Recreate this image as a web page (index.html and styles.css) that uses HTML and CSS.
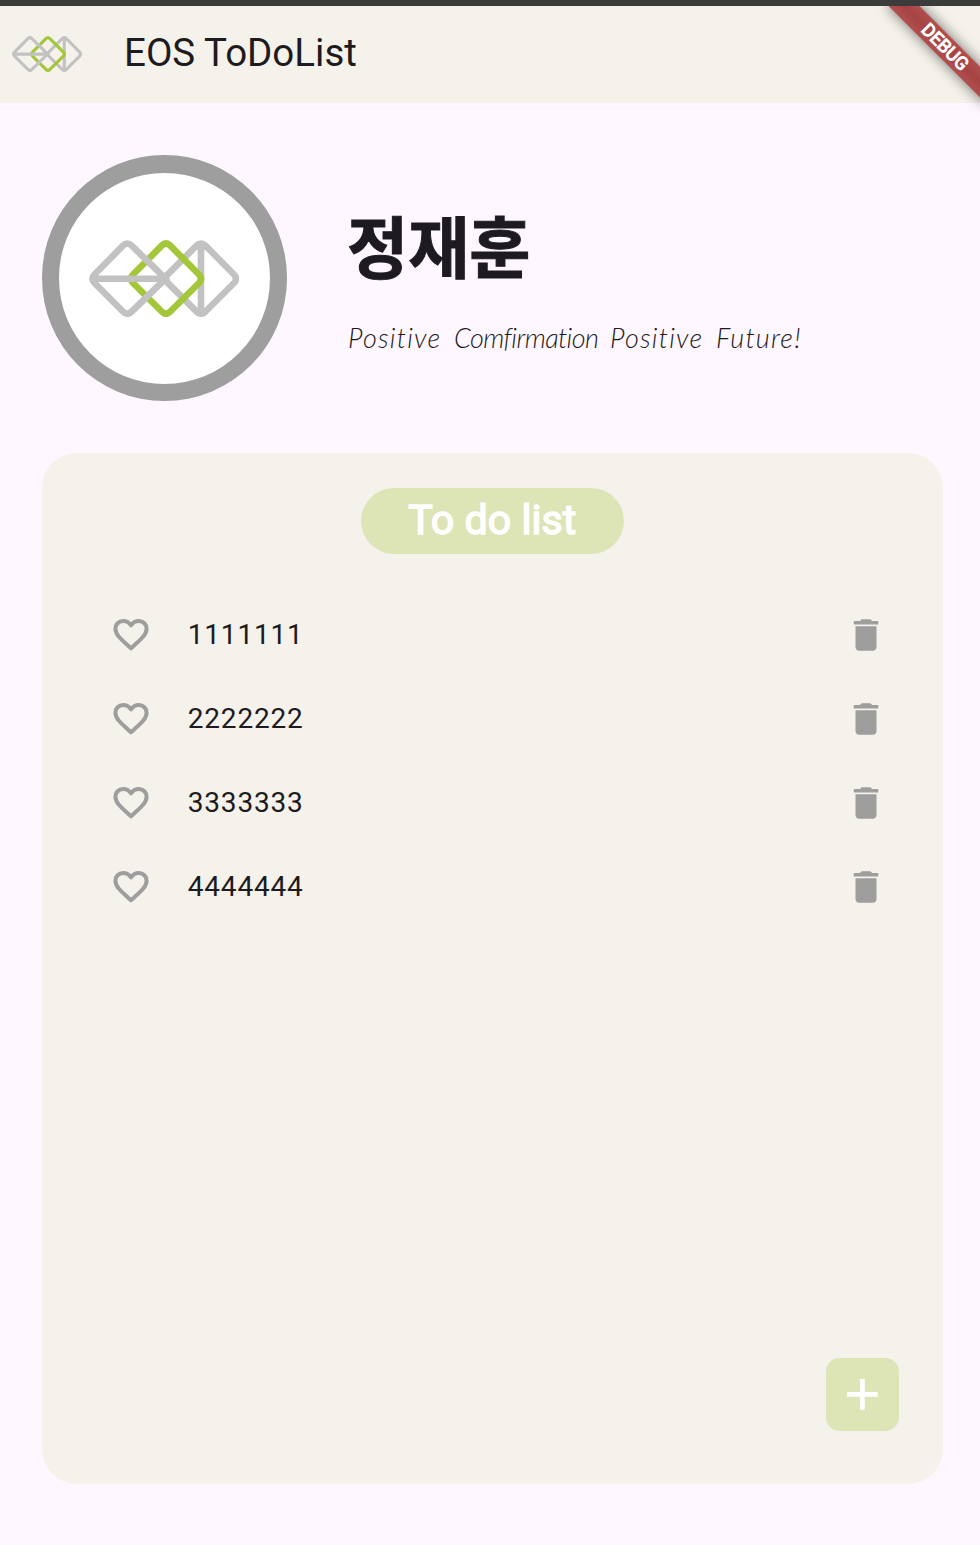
FILE: index.html
```html
<!DOCTYPE html>
<html lang="ko">
<head>
<meta charset="utf-8">
<title>EOS ToDoList</title>
<link rel="stylesheet" href="styles.css">
</head>
<body>
<svg class="defs" width="0" height="0">
  <symbol id="logo" viewBox="0 0 150 77" preserveAspectRatio="none">
    <g fill="none" stroke-width="6.6">
      <path stroke="#c2c2c2" d="M74.5 38.7 107.5 5.7Q112 1.5 116.5 5.7L145 34.5Q149 38.7 145 43L116.5 71.5Q112 75.8 107.5 71.5ZM112 4V73"/>
      <path stroke="#a4c639" d="M72.7 5.7Q77 1.5 81.3 5.7L110 34.5Q114 38.7 110 43L81.3 71.5Q77 75.8 72.7 71.5L44 43Q39.8 38.7 44 34.5Z"/>
      <path stroke="#c2c2c2" d="M76.5 38.7 42.8 5.7Q38.3 1.5 33.9 5.7L5.5 34.5Q1.2 38.7 5.5 43L33.9 71.5Q38.3 75.8 42.8 71.5ZM4 38.7H76"/>
    </g>
  </symbol>
  <symbol id="heart" viewBox="0 0 24 24">
    <path fill="none" stroke="#9e9e9e" stroke-width="2.3" stroke-linejoin="round" d="M12 19.6 10.7 18.400C5.900 14.100 3.100 11.700 3.100 8.400 3.100 5.900 5 4 7.500 4 9.300 4 11 5 12 6.500 13 5 14.700 4 16.500 4 19 4 20.900 5.900 20.900 8.400 20.900 11.700 18.100 14.100 13.300 18.400Z"/>
  </symbol>
  <symbol id="trash" viewBox="0 0 24 24">
    <path d="M6 19c0 1.100.9 2 2 2h8c1.100 0 2-.9 2-2V7H6v12zM19 4h-3.500l-1-1h-5l-1 1H5v2h14V4z"/>
  </symbol>
</svg>
<div class="status"></div>
<header class="appbar">
  <svg class="logo-small"><use href="#logo"/></svg>
  <h1 class="title">EOS ToDoList</h1>
  <div class="corner"><div class="debug">DEBUG</div></div>
</header>
<main class="content">
  <section class="profile">
    <div class="avatar"><svg class="logo-large"><use href="#logo"/></svg></div>
    <div class="who">
      <h2 class="name">정재훈</h2>
      <p class="motto"><span class="w1">Positive</span> <span class="w2">Comfirmation</span> <span class="w1">Positive</span> <span class="w4">Future!</span></p>
    </div>
  </section>
  <section class="card">
    <div class="pill">To do list</div>
    <ul class="list">
      <li class="item"><svg class="icon"><use href="#heart"/></svg><span class="label">1111111</span><svg class="icon"><use href="#trash"/></svg></li>
      <li class="item"><svg class="icon"><use href="#heart"/></svg><span class="label">2222222</span><svg class="icon"><use href="#trash"/></svg></li>
      <li class="item"><svg class="icon"><use href="#heart"/></svg><span class="label">3333333</span><svg class="icon"><use href="#trash"/></svg></li>
      <li class="item"><svg class="icon"><use href="#heart"/></svg><span class="label">4444444</span><svg class="icon"><use href="#trash"/></svg></li>
    </ul>
    <button class="add" aria-label="Add"><svg class="plus" viewBox="0 0 24 24"><path d="M19.100 13.150h-5.950v5.950h-2.150v-5.950H5v-2.150h6V5h2.150v6h5.950z"/></svg></button>
  </section>
</main>
</body>
</html>
```
FILE: styles.css
```css
* { box-sizing: border-box; }
body {
  margin: 0;
  height: 1545px;
  overflow: hidden;
  background: #fef7ff;
  color: #1d1b20;
  font-family: Roboto, sans-serif;
}
h1, h2, p, ul { margin: 0; padding: 0; font-weight: 400; }
.defs { display: block; height: 0; }
.status { height: 6px; background: #3c3b3b; }
.appbar {
  position: relative;
  height: 97px;
  display: flex;
  align-items: center;
  gap: 42px;
  padding: 0 0 4px 12px;
  background: #f4f2ea;
}
.logo-small { width: 70px; height: 36px; margin-top: 3px; }
.title { font-size: 38.5px; line-height: 50px; }
.corner {
  position: absolute;
  top: 0;
  right: 0;
  width: 140px;
  height: 140px;
  overflow: hidden;
}
.debug {
  position: absolute;
  left: 35px;
  top: 29.5px;
  width: 140px;
  height: 22px;
  transform: rotate(45deg);
  background: linear-gradient(#b04f4e, #a54342 50%, #b04f4e);
  box-shadow: 0 0 14px rgba(0, 0, 0, .55);
  color: #fff;
  font-size: 18.2px;
  font-weight: 400;
  -webkit-text-stroke: 1px #fff;
  line-height: 21px;
  text-align: center;
}
.content { padding: 52px 37px 0 42px; }
.profile { display: flex; gap: 61px; height: 298px; }
.avatar {
  width: 245px;
  height: 245.5px;
  border: 17.5px solid #9e9e9e;
  border-top-width: 18px;
  border-radius: 50%;
  background: #fff;
  display: flex;
  align-items: center;
  justify-content: center;
}
.logo-large { width: 150px; height: 77px; margin-right: 1.5px; }
.who { padding-top: 41px; }
.name {
  font: 700 66.5px/96px "Noto Sans CJK KR", sans-serif;
  margin-left: -1px;
  -webkit-text-stroke: 1px #1d1b20;
}
.motto {
  display: flex;
  gap: 13px;
  margin-top: 26px;
  font: italic 300 27px/40px Lato, sans-serif;
  font-variant-ligatures: none;
  white-space: nowrap;
}
.w1 { width: 93px; letter-spacing: 1.2px; }
.w2 { width: 143px; letter-spacing: -.6px; }
.w4 { width: 86px; letter-spacing: 1.2px; }
.card {
  height: 1031px;
  border-radius: 35px;
  background: #f4f2ea;
  padding: 35px 43.6px 52.600px 68px;
  display: flex;
  flex-direction: column;
}
.pill {
  width: 262.5px;
  height: 66px;
  margin-left: 251px;
  border-radius: 35px;
  background: #dde5b6;
  color: #fff;
  font-size: 41.2px;
  line-height: 64px;
  text-align: center;
  -webkit-text-stroke: 1.5px #fff;
}
.list { list-style: none; padding: 39px 12px 0 0; flex: 1; }
.item { height: 84px; display: flex; align-items: center; }
.icon { width: 42px; height: 42px; fill: #9e9e9e; }
.label {
  flex: 1;
  margin-left: 35.8px;
  padding-bottom: 2px;
  font-size: 28px;
  letter-spacing: .8px;
}
.add {
  align-self: flex-end;
  width: 73.5px;
  height: 73.5px;
  padding: 0;
  border: 0;
  border-radius: 14px;
  background: #dde5b6;
  display: flex;
  align-items: center;
  justify-content: center;
}
.plus { width: 52.5px; height: 52.5px; fill: #fff; }
```
